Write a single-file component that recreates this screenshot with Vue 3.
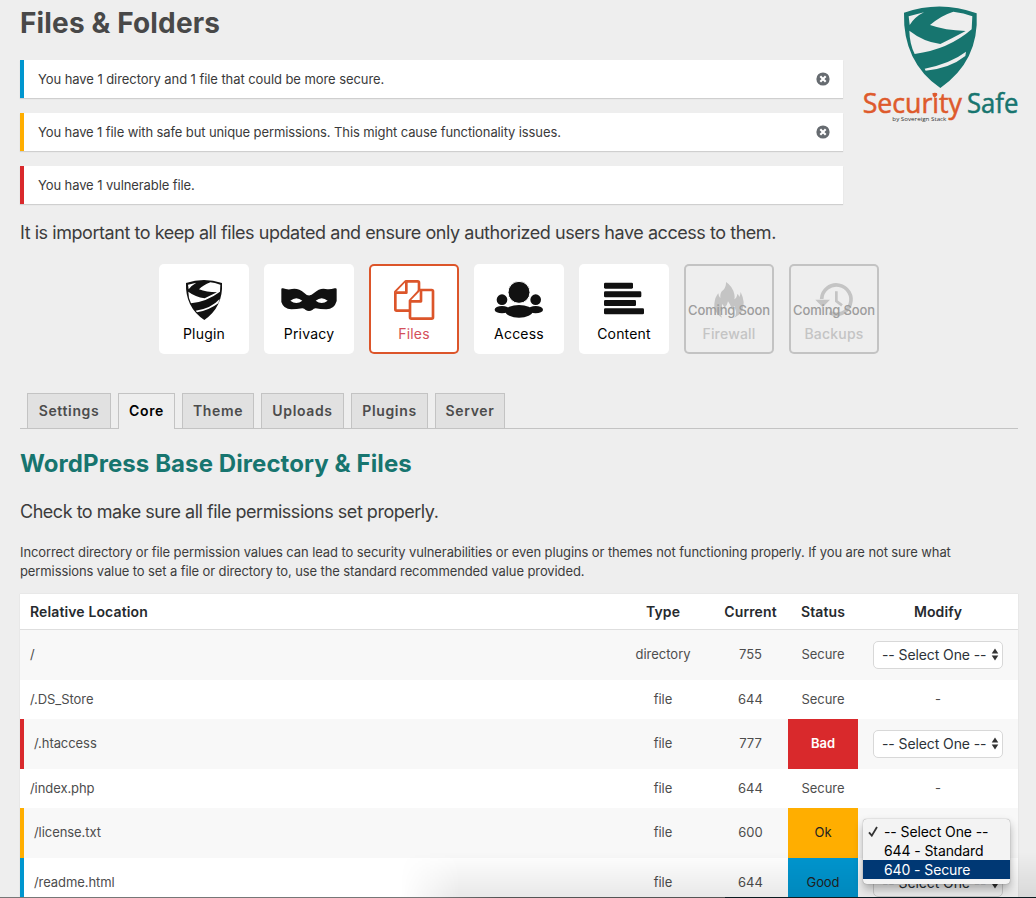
<script setup>
const notices = [
  { tone: 'blue', text: 'You have 1 directory and 1 file that could be more secure.', close: true },
  { tone: 'amber', text: 'You have 1 file with safe but unique permissions. This might cause functionality issues.', close: true },
  { tone: 'red', text: 'You have 1 vulnerable file.', close: false },
]
const tiles = [
  { id: 'plugin', label: 'Plugin' },
  { id: 'privacy', label: 'Privacy' },
  { id: 'files', label: 'Files', active: true },
  { id: 'access', label: 'Access' },
  { id: 'content', label: 'Content' },
  { id: 'firewall', label: 'Firewall', soon: true },
  { id: 'backups', label: 'Backups', soon: true },
]
const tabs = [
  { id: 'settings', label: 'Settings' },
  { id: 'core', label: 'Core' },
  { id: 'theme', label: 'Theme' },
  { id: 'uploads', label: 'Uploads' },
  { id: 'plugins', label: 'Plugins' },
  { id: 'server', label: 'Server' },
]
const rows = [
  { path: '/', type: 'directory', current: '755', status: 'Secure', select: true },
  { path: '/.DS_Store', type: 'file', current: '644', status: 'Secure' },
  { path: '/.htaccess', type: 'file', current: '777', status: 'Bad', tone: 'red', select: true },
  { path: '/index.php', type: 'file', current: '644', status: 'Secure' },
  { path: '/license.txt', type: 'file', current: '600', status: 'Ok', tone: 'amber', select: true, open: true },
  { path: '/readme.html', type: 'file', current: '644', status: 'Good', tone: 'blue', select: true },
]
</script>

<template>
  <div class="page">
    <header class="top">
      <div class="intro">
        <h1>Files &amp; Folders</h1>
        <div v-for="n in notices" :key="n.tone" class="notice" :class="n.tone">
          <span>{{ n.text }}</span>
          <svg v-if="n.close" class="close" viewBox="0 0 14 14">
            <circle cx="7" cy="7" r="6.6" fill="#666b70" />
            <path d="M4.3 4.3l5.4 5.4M9.7 4.3l-5.4 5.4" stroke="#fff" stroke-width="2.1" />
          </svg>
        </div>
      </div>
      <svg class="logo" viewBox="0 0 558 390">
        <path fill="#17756f" fill-rule="evenodd" d="M162 38Q271 0 380 40Q388 183 271 264Q158 186 162 38ZM176 49L222 37Q195 50 179 75ZM310 35Q272 47 240 75Q285 91 347 93Q308 114 271 132Q220 125 178 92Q179 132 194 162Q295 149 365 88L367 49Q342 39 310 35ZM224 206Q302 190 348 155L346 168Q300 205 227 212Z" />
        <g class="brand">
          <text x="38" y="338" font-size="80" textLength="298" lengthAdjust="spacingAndGlyphs" fill="#de5a2c" stroke="#de5a2c" stroke-width="1.6">Security</text>
          <text x="351" y="338" font-size="80" textLength="154" lengthAdjust="spacingAndGlyphs" fill="#17756f" stroke="#17756f" stroke-width="1.6">Safe</text>
          <text x="127" y="362" font-size="18" textLength="162" lengthAdjust="spacingAndGlyphs" fill="#333">by Sovereign Stack</text>
        </g>
        <path d="M247 280q7-4 14 0q0 10-7 14q-7-4-7-14z" fill="#de5a2c" />
      </svg>
    </header>

    <p class="lede first">It is important to keep all files updated and ensure only authorized users have access to them.</p>

    <nav class="tiles">
      <a v-for="t in tiles" :key="t.id" class="tile" :class="{ active: t.active, soon: t.soon }">
        <svg class="icon" viewBox="0 0 270 180" fill="currentColor">
          <path v-if="t.id === 'plugin'" fill-rule="evenodd" d="M81 57Q135 39 189 57Q193 128 136 168Q78 129 81 57ZM87 62L112 56Q96 65 89 76ZM154 55Q132 64 120 76Q142 85 174 85Q158 93 137 103Q109 99 88 83Q88 103 96 118Q145 112 183 83L184 62Q167 56 154 55ZM110 140Q156 134 182 105L178 118Q150 139 114 145Z" />
          <path v-else-if="t.id === 'privacy'" fill-rule="evenodd" d="M52 75Q52 72 57 73Q71 78 84 75Q104 72 120 86Q135 102 150 87Q168 71 185 75Q198 77 212 73Q218 71 218 76L218 111Q211 136 187 136Q168 136 155 133Q149 133 145 138Q135 144 125 138Q121 133 115 133Q98 136 82 136Q59 136 52 114ZM79 110Q97 124 115 110Q97 95 79 110ZM155 110Q173 124 191 110Q173 95 155 110Z" />
          <g v-else-if="t.id === 'files'" fill="#fff" stroke="currentColor" stroke-width="8" stroke-linejoin="round">
            <path d="M110 52H146Q150 52 150 56V140H83Q79 140 79 136V84Z" />
            <path d="M112 52V86H79" />
            <path d="M153 78H188Q192 78 192 82V160Q192 164 188 164H127Q123 164 123 160V110Z" />
            <path d="M156 78V112H123" />
          </g>
          <g v-else-if="t.id === 'access'">
            <circle cx="84" cy="107" r="16" /><circle cx="185" cy="107" r="16" />
            <ellipse cx="84" cy="137" rx="22" ry="11" /><ellipse cx="185" cy="137" rx="22" ry="11" />
            <ellipse cx="135" cy="142" rx="41" ry="19" />
            <circle cx="135" cy="85" r="33" stroke="#fff" stroke-width="3" />
          </g>
          <g v-else-if="t.id === 'content'">
            <rect x="75" y="56" width="87" height="18" rx="4" /><rect x="75" y="82" width="112" height="18" rx="4" />
            <rect x="75" y="108" width="96" height="18" rx="4" /><rect x="75" y="133" width="120" height="18" rx="4" />
          </g>
          <path v-else-if="t.id === 'firewall'" d="M114 161Q87 144 91 119Q93 99 103 88Q104 99 109 102Q107 85 118 78Q127 68 126 54Q146 67 151 91Q153 100 151 106Q158 103 160 90Q163 90 166 99Q169 93 170 84Q185 115 175 139Q168 153 151 161Q160 149 154 136Q151 130 152 126Q145 130 143 136Q140 122 132 112Q130 125 121 132Q117 120 114 121Q116 131 111 139Q107 148 114 161Z" />
          <g v-else fill="none" stroke="currentColor">
            <path d="M98 105A44 44 0 1 1 122 146" stroke-width="11" />
            <path d="M79 107H123L101 130Z" fill="currentColor" stroke="none" />
            <path d="M142 82V111L159 124" stroke-width="8" />
          </g>
        </svg>
        <span class="label">{{ t.label }}</span>
        <span v-if="t.soon" class="flag">Coming Soon</span>
      </a>
    </nav>

    <nav class="tabs">
      <a v-for="t in tabs" :key="t.id" :class="[t.id, { current: t.id === 'core' }]">{{ t.label }}</a>
    </nav>

    <h2>WordPress Base Directory &amp; Files</h2>
    <p class="lede second">Check to make sure all file permissions set properly.</p>
    <p class="copy">
      Incorrect directory or file permission values can lead to security vulnerabilities or even plugins or themes not functioning properly. If you are not sure what<br>
      permissions value to set a file or directory to, use the standard recommended value provided.
    </p>

    <div class="table">
      <div class="row head">
        <span>Relative Location</span><span>Type</span><span>Current</span><span>Status</span><span>Modify</span>
      </div>
      <div v-for="r in rows" :key="r.path" class="row" :class="[r.tone, { tall: r.select }]">
        <span class="path">{{ r.path }}</span>
        <span class="cell">{{ r.type }}</span>
        <span class="cell">{{ r.current }}</span>
        <span class="status">{{ r.status }}</span>
        <span class="modify">
          <span v-if="r.select" class="select" :class="{ focus: r.open }">
            -- Select One --
            <svg viewBox="0 0 8 13" width="8" height="13"><path d="M4 0.5L7.3 5.6H.7zM4 12.5L.7 7.4H7.3z" fill="#333" /></svg>
          </span>
          <span v-else class="cell">-</span>
          <span v-if="r.open" class="menu">
            <span class="option"><svg viewBox="0 0 10 11" width="10" height="11"><path d="M1 6.3L3.8 9.6L9 1" fill="none" stroke="#333" stroke-width="1.8" /></svg>-- Select One --</span>
            <span class="option">644 - Standard</span>
            <span class="option chosen">640 - Secure</span>
          </span>
        </span>
      </div>
    </div>
    <div class="shade"></div>
    <div class="edge"></div>
  </div>
</template>

<style>
html, body { background: #eee; overflow: hidden; }
</style>

<style scoped>
* { box-sizing: border-box; }
.page { position: relative; width: 1036px; height: 898px; padding: 0 18px 0 20px; overflow: hidden; background: #eee; color: #3c3c3c; font-family: Inter, "Liberation Sans", sans-serif; }
h1, h2, p { margin: 0; white-space: nowrap; }
.top { display: flex; justify-content: space-between; height: 220px; margin-right: -18px; }
.intro { width: 823px; }
h1 { height: 60px; line-height: 47px; font-size: 28px; font-weight: 700; color: #484848; letter-spacing: .15px; }
.notice { display: flex; align-items: center; justify-content: space-between; height: 38px; margin-bottom: 15px; padding: 0 13px 0 14px; border-left: 4px solid; background: #fff; box-shadow: 0 1px 1px rgba(0,0,0,.13); font-size: 13px; letter-spacing: -.07px; white-space: nowrap; }
.notice span { color: #3a3a3a; }
.notice.blue { border-color: #0096cf; }
.notice.amber { border-color: #ffae00; letter-spacing: -.105px; }
.notice.red { border-color: #d9292c; letter-spacing: -.1px; }
.close { width: 14px; height: 14px; }
.logo { width: 186px; height: 130px; }
.brand { font-family: "Open Sans", "Noto Sans", sans-serif; }
.lede { font-size: 18px; line-height: 26px; }
.first { letter-spacing: -.45px; }
.tiles { display: flex; gap: 15px; margin: 18px 0 0 139px; }
.tile { position: relative; display: flex; flex-direction: column; width: 90px; height: 90px; border-radius: 5px; background: #fff; color: #111; text-align: center; }
.icon { width: 90px; height: 60px; }
.label { font-size: 14px; line-height: 20px; letter-spacing: .2px; color: #000; }
.active { box-shadow: inset 0 0 0 2px #dc552a; color: #dc552a; }
.active .label { color: #d4505a; }
.soon { background: transparent; box-shadow: inset 0 0 0 2px #c3c3c3; color: #c4c4c4; }
.soon .label { color: #c4c4c4; font-weight: 500; }
.flag { position: absolute; left: 0; right: 0; top: 36px; line-height: 20px; font-size: 13px; font-weight: 500; letter-spacing: -.15px; color: #9c9c9c; white-space: nowrap; }
.tabs { display: flex; gap: 7px; height: 36px; margin-top: 39px; padding-left: 7px; border-bottom: 1px solid #c3c3c3; }
.tabs a { height: 35px; border: 1px solid #c3c3c3; border-bottom: 0; background: #e1e1e1; text-align: center; line-height: 34px; font-size: 14px; font-weight: 600; letter-spacing: .65px; color: #4c4c4c; }
.tabs .current { height: 36px; background: #eee; color: #000; }
.settings { width: 84px; } .core { width: 57px; } .theme { width: 72px; } .uploads { width: 83px; } .plugins { width: 77px; } .server { width: 70px; }
h2 { margin-top: 20px; line-height: 30px; font-size: 24px; font-weight: 700; color: #17756f; letter-spacing: .08px; }
.second { margin-top: 20px; letter-spacing: -.48px; }
.copy { margin-top: 18px; line-height: 19px; font-size: 13px; color: #3c3c3c; letter-spacing: -.105px; }
.table { margin-top: 13px; background: #fff; box-shadow: 0 0 1px rgba(0,0,0,.15); }
.row { display: grid; grid-template-columns: 598px 90px 85px 60px 165px; grid-template-columns: 598px 90px 80px 70px 160px; width: 998px; height: 39px; align-items: center; text-align: center; font-size: 13px; color: #4d4d4d; }
.row > span:first-child { text-align: left; padding-left: 10px; }
.row > span:nth-child(3) { padding-left: 5px; }
.head { height: 36px; border-bottom: 1px solid #dedede; font-size: 14px; font-weight: 600; letter-spacing: .12px; color: #262a2e; }
.row:nth-child(even) { background: #f8f8f8; }
.tall { height: 50px; }
.row .path { display: flex; align-items: center; height: 100%; padding-bottom: 2px; letter-spacing: -.07px; }
.cell { padding-bottom: 2px; }
.row.red .path { border-left: 4px solid #d9292c; }
.row.amber .path { border-left: 4px solid #ffae00; }
.row.blue .path { border-left: 4px solid #0096cf; }
.status { display: flex; align-items: center; justify-content: center; height: 100%; padding-bottom: 2px; letter-spacing: -.07px; }
.red .status { background: #d9292c; color: #fff; font-weight: 600; }
.amber .status { background: #ffae00; color: #222; }
.blue .status { background: #0096cf; color: #222; }
.modify { position: relative; display: flex; align-items: center; justify-content: center; height: 100%; }
.select { display: flex; align-items: center; justify-content: space-between; width: 130px; height: 28px; padding: 0 3px 1px 8px; border: 1px solid #d8d8d8; border-radius: 5px; background: #fff; font-size: 14px; letter-spacing: -.1px; color: #2c3238; white-space: nowrap; }
.select.focus { border-color: #5b9dd9; }
.menu { position: absolute; z-index: 3; left: 5px; top: 11px; width: 147px; height: 65px; padding-top: 3px; border-radius: 4px; background: #f3f3f3; box-shadow: 0 0 1px rgba(0,0,0,.5), 0 5px 10px rgba(0,0,0,.3); text-align: left; }
.option { position: relative; display: block; height: 19px; padding-left: 21px; line-height: 19px; font-size: 14px; letter-spacing: -.1px; color: #000; white-space: nowrap; }
.option svg { position: absolute; left: 5px; top: 4px; }
.chosen { background: #003874; color: #fff; }
.shade { position: absolute; z-index: 2; left: 400px; right: 0; top: 852px; height: 46px; background: linear-gradient(transparent, rgba(0,0,0,.09)); -webkit-mask-image: linear-gradient(90deg, transparent, #000 60px); mask-image: linear-gradient(90deg, transparent, #000 60px); }
.edge { position: absolute; z-index: 4; left: 0; right: 0; bottom: 0; height: 1px; background: linear-gradient(90deg, #777 0, #777 440px, #555 500px, #555 725px, #0c1b20 725px); }
</style>
